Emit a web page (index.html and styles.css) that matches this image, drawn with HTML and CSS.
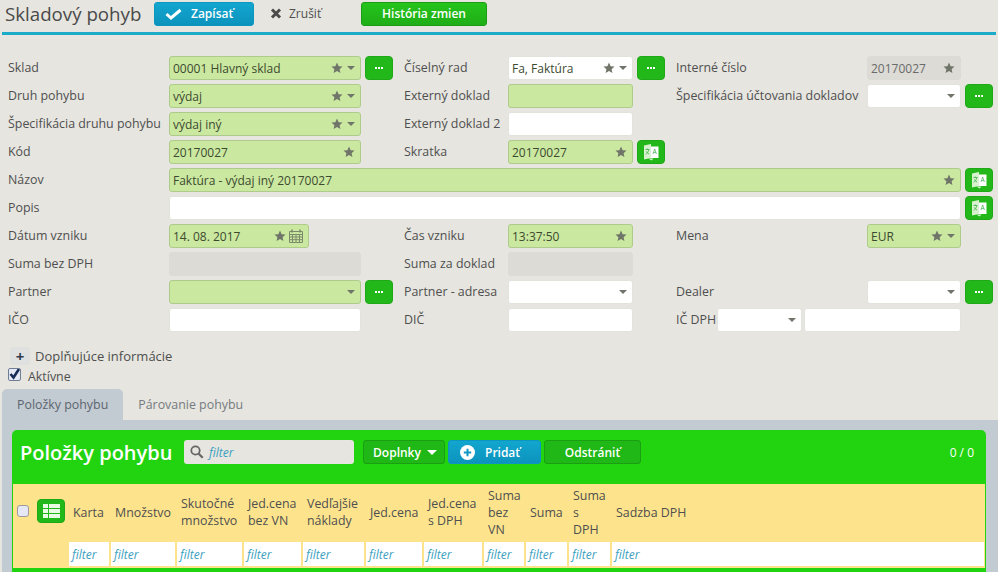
FILE: index.html
```html
<!DOCTYPE html>
<html lang="sk">
<head>
    <meta charset="UTF-8">
    <title>Skladový pohyb</title>
    <link rel="stylesheet" href="styles.css">
</head>
<body>

<svg class="defs" width="0" height="0">
    <symbol id="i-star" viewBox="0 0 12 12"><path d="M6 .6l1.600 3.600 3.900.4-2.900 2.600.8 3.900L6 9.100l-3.400 2 .8-3.900L.5 4.600l3.900-.4z"/></symbol>
    <symbol id="i-dots" viewBox="0 0 8 2"><path d="M0 0h2v2H0zM3 0h2v2H3zM6 0h2v2H6z" fill="#fff"/></symbol>
    <symbol id="i-trans" viewBox="0 0 16 18">
        <path d="M1 2.500L8 1v14l-7 1.500z" fill="#d8f2cf"/>
        <path d="M8 3.500h7.500v11.500H8z" fill="#fff"/>
        <path d="M2.500 6.500h4M4.400 5.500v1M5.800 6.800C5.200 9 4 10.500 2.600 11.500M3.400 8.500c.6 1.200 1.400 2.100 2.600 2.600" fill="none" stroke="#3fae4a" stroke-width=".8"/>
        <path d="M10 11l1.700-5 1.700 5M10.600 9.500h2.200" fill="none" stroke="#58b96a" stroke-width=".8"/>
        <path d="M5.500 15.500h5L8.500 17.500z" fill="#d8f2cf"/>
    </symbol>
</svg>

<header class="topbar">
    <h1 class="page-title">Skladový pohyb</h1>
    <button class="btn btn-blue btn-save">
        <svg width="17" height="12" viewBox="0 0 17 12"><path d="M1.500 6l4.500 4L15.500 2" fill="none" stroke="#fff" stroke-width="3"/></svg>
        Zapísať
    </button>
    <button class="btn-link">
        <svg width="12" height="11" viewBox="0 0 12 11"><path d="M2 1.500l8 8M10 1.500l-8 8" fill="none" stroke="#4a4a4a" stroke-width="3"/></svg>
        Zrušiť
    </button>
    <button class="btn btn-green btn-history">História zmien</button>
</header>

<form class="form-grid">
    <!-- riadok 1 -->
    <label>Sklad</label>
    <div class="field req"><input value="00001 Hlavný sklad"><svg class="star"><use href="#i-star"/></svg><i class="caret"></i></div>
    <div class="side"><button type="button" class="sq"><svg class="dots"><use href="#i-dots"/></svg></button></div>
    <label>Číselný rad</label>
    <div class="field"><input value="Fa, Faktúra"><svg class="star"><use href="#i-star"/></svg><i class="caret"></i></div>
    <div class="side"><button type="button" class="sq"><svg class="dots"><use href="#i-dots"/></svg></button></div>
    <label>Interné číslo</label>
    <div class="field off"><input value="20170027"><svg class="star"><use href="#i-star"/></svg></div>
    <div></div>

    <!-- riadok 2 -->
    <label>Druh pohybu</label>
    <div class="field req"><input value="výdaj"><svg class="star"><use href="#i-star"/></svg><i class="caret"></i></div>
    <div></div>
    <label>Externý doklad</label>
    <div class="field req"><input></div>
    <div></div>
    <label>Špecifikácia účtovania dokladov</label>
    <div class="field"><input><i class="caret"></i></div>
    <div class="side"><button type="button" class="sq"><svg class="dots"><use href="#i-dots"/></svg></button></div>

    <!-- riadok 3 -->
    <label>Špecifikácia druhu pohybu</label>
    <div class="field req"><input value="výdaj iný"><svg class="star"><use href="#i-star"/></svg><i class="caret"></i></div>
    <div></div>
    <label>Externý doklad 2</label>
    <div class="field"><input></div>
    <div class="rest"></div>

    <!-- riadok 4 -->
    <label>Kód</label>
    <div class="field req"><input value="20170027"><svg class="star"><use href="#i-star"/></svg></div>
    <div></div>
    <label>Skratka</label>
    <div class="field req"><input value="20170027"><svg class="star"><use href="#i-star"/></svg></div>
    <div class="side"><button type="button" class="sq"><svg class="trans"><use href="#i-trans"/></svg></button></div>
    <div class="rest-3"></div>

    <!-- riadok 5 -->
    <label>Názov</label>
    <div class="field req wide"><input value="Faktúra - výdaj iný 20170027"><svg class="star"><use href="#i-star"/></svg></div>
    <div class="side"><button type="button" class="sq"><svg class="trans"><use href="#i-trans"/></svg></button></div>

    <!-- riadok 6 -->
    <label>Popis</label>
    <div class="field wide"><input></div>
    <div class="side"><button type="button" class="sq"><svg class="trans"><use href="#i-trans"/></svg></button></div>

    <!-- riadok 7 -->
    <label>Dátum vzniku</label>
    <div class="date-cell">
        <div class="field req date"><input value="14. 08. 2017"><svg class="star"><use href="#i-star"/></svg>
            <svg class="cal" width="14" height="14" viewBox="0 0 14 14"><path d="M.5 2.500h13v11H.5zM.5 5.500h13M.5 8h13M.5 10.700h13M3.500 5.500v8M7 5.500v8M10.500 5.500v8" fill="none" stroke="#7c8a6c"/><path d="M3 .5v3M11 .5v3" stroke="#7c8a6c" stroke-width="1.600"/></svg>
        </div>
    </div>
    <div></div>
    <label>Čas vzniku</label>
    <div class="field req"><input value="13:37:50"><svg class="star"><use href="#i-star"/></svg></div>
    <div></div>
    <label>Mena</label>
    <div class="field req"><input value="EUR"><svg class="star"><use href="#i-star"/></svg><i class="caret"></i></div>
    <div></div>

    <!-- riadok 8 -->
    <label>Suma bez DPH</label>
    <div class="field off"></div>
    <div></div>
    <label>Suma za doklad</label>
    <div class="field off"></div>
    <div class="rest"></div>

    <!-- riadok 9 -->
    <label>Partner</label>
    <div class="field req"><input><i class="caret"></i></div>
    <div class="side"><button type="button" class="sq"><svg class="dots"><use href="#i-dots"/></svg></button></div>
    <label>Partner - adresa</label>
    <div class="field"><input><i class="caret"></i></div>
    <div></div>
    <label>Dealer</label>
    <div class="field"><input><i class="caret"></i></div>
    <div class="side"><button type="button" class="sq"><svg class="dots"><use href="#i-dots"/></svg></button></div>

    <!-- riadok 10 -->
    <label>IČO</label>
    <div class="field"><input></div>
    <div></div>
    <label>DIČ</label>
    <div class="field"><input></div>
    <div></div>
    <div class="vat">
        <label>IČ DPH</label>
        <div class="field vat-code"><input><i class="caret"></i></div>
        <div class="field vat-num"><input></div>
    </div>
</form>

<div class="more">
    <button class="more-btn">+</button>
    <span>Doplňujúce informácie</span>
</div>
<label class="active-row"><input type="checkbox" checked> Aktívne</label>

<nav class="tabs">
    <a class="tab tab-on">Položky pohybu</a>
    <a class="tab">Párovanie pohybu</a>
</nav>

<section class="tab-body">
    <div class="panel">
        <div class="panel-head">
            <h2>Položky pohybu</h2>
            <div class="search">
                <svg width="14" height="14" viewBox="0 0 14 14"><circle cx="5.500" cy="5.500" r="4.200" fill="none" stroke="#666" stroke-width="1.800"/><path d="M8.700 8.700l4 4" stroke="#666" stroke-width="2.200"/></svg>
                <span>filter</span>
            </div>
            <button class="btn btn-dark btn-more">Doplnky <i class="caret caret-w"></i></button>
            <button class="btn btn-blue btn-add">
                <svg width="15" height="15" viewBox="0 0 15 15"><circle cx="7.500" cy="7.500" r="7.500" fill="#fff"/><path d="M3.800 7.500h7.400M7.500 3.800v7.400" stroke="#0f98c4" stroke-width="2"/></svg>
                Pridať
            </button>
            <button class="btn btn-dark btn-del">Odstrániť</button>
            <span class="count">0 / 0</span>
        </div>

        <table class="grid">
            <colgroup>
                <col width="22"><col width="33"><col width="42"><col width="66"><col width="67"><col width="59"><col width="63">
                <col width="58"><col width="60"><col width="42"><col width="43"><col width="43"><col>
            </colgroup>
            <thead>
                <tr class="titles">
                    <th class="chk"><input type="checkbox"></th>
                    <th class="tool"><button class="sq"><svg width="17" height="14" viewBox="0 0 17 14"><path d="M0 0h5v4H0zM6 0h11v4H6zM0 5h5v4H0zM6 5h11v4H6zM0 10h5v4H0zM6 10h11v4H6z" fill="#e9fbe2"/></svg></button></th>
                    <th>Karta</th>
                    <th>Množstvo</th>
                    <th>Skutočné množstvo</th>
                    <th>Jed.cena bez VN</th>
                    <th>Vedľajšie náklady</th>
                    <th>Jed.cena</th>
                    <th>Jed.cena s DPH</th>
                    <th>Suma bez VN</th>
                    <th>Suma</th>
                    <th>Suma<br>s<br>DPH</th>
                    <th>Sadzba DPH</th>
                </tr>
                <tr class="filters">
                    <td></td><td></td>
                    <td><span>filter</span></td><td><span>filter</span></td><td><span>filter</span></td><td><span>filter</span></td><td><span>filter</span></td>
                    <td><span>filter</span></td><td><span>filter</span></td><td><span>filter</span></td><td><span>filter</span></td><td><span>filter</span></td><td><span>filter</span></td>
                </tr>
            </thead>
        </table>
    </div>
</section>

</body>
</html>
```

FILE: styles.css
```css
* {
    box-sizing: border-box;
}

html, body {
    height: 572px;
    overflow: hidden;
}

body {
    margin: 0;
    background: #e6e5df;
    font-family: "Open Sans", "Liberation Sans", sans-serif;
    font-size: 12.4px;
    color: #4f4f4f;
}

.defs {
    display: block;
    height: 0;
}

button {
    font-family: inherit;
}

/* horny pruh */
.topbar {
    display: flex;
    align-items: center;
    height: 35px;
    margin: 0 2px;
    padding: 0 0 5px 3px;
    border-bottom: 3px solid #1cabc9;
}

.page-title {
    margin: 0;
    width: 149px;
    font-size: 18.7px;
    font-weight: 400;
    color: #4a4a4a;
}

.btn {
    display: flex;
    align-items: center;
    justify-content: center;
    height: 24px;
    border-radius: 3px;
    color: #fff;
    font-size: 12px;
    font-weight: 600;
    padding: 0;
    cursor: pointer;
}

.btn-blue {
    background: linear-gradient(#12a6cf, #0c93bd);
    border: 1px solid #0d97c0;
}

.btn-green {
    background: linear-gradient(#25c41b, #1fae17);
    border: 1px solid #1c9c15;
}

.btn-dark {
    background: #1fb816;
    border: 1px solid #1a9f13;
}

.btn-save {
    justify-content: flex-start;
    width: 100px;
    padding-left: 10px;
    gap: 9px;
}

.btn-link {
    display: flex;
    align-items: center;
    gap: 7px;
    width: 91px;
    margin-left: 16px;
    padding: 0;
    border: none;
    background: none;
    font-size: 12px;
    color: #4f4f4f;
}

.btn-history {
    width: 126px;
}

/* formular */
.form-grid {
    display: grid;
    grid-template-columns: 161px 192px 43px 104px 125px 43px 191px 94px 32px;
    grid-auto-rows: 24px;
    row-gap: 4px;
    margin-top: 21px;
    padding-left: 8px;
}

.form-grid label {
    line-height: 23px;
    white-space: nowrap;
}

.field {
    display: flex;
    align-items: center;
    height: 24px;
    padding-right: 5px;
    background: #fff;
    border: 1px solid #e3e3de;
    border-radius: 3px;
}

.field input {
    flex: 1;
    min-width: 0;
    height: 22px;
    padding: 1px 0 0 3px;
    border: none;
    outline: none;
    background: transparent;
    font: 12px "Open Sans", "Liberation Sans", sans-serif;
    color: #3c4a30;
}

.req {
    background: #cbe8a0;
    border-color: #aecb8b;
}

.off {
    background: #dcdbd6;
    border-color: #dcdbd6;
}

.off input {
    color: #6a6a6a;
}

.star {
    flex: none;
    width: 12px;
    height: 12px;
    fill: #6f7568;
}

.caret {
    flex: none;
    width: 0;
    height: 0;
    margin-left: 4px;
    border-left: 4px solid transparent;
    border-right: 4px solid transparent;
    border-top: 4px solid #6f7568;
}

.caret-w {
    border-left-width: 5px;
    border-right-width: 5px;
    border-top: 5px solid #fff;
    margin-left: 6px;
}

.wide {
    grid-column: 2 / 9;
}

.side {
    padding-left: 4px;
}

.rest {
    grid-column: 6 / 10;
}

.rest-3 {
    grid-column: 7 / 10;
}

.date {
    width: 140px;
}

.cal {
    margin-left: 3px;
}

.sq {
    display: flex;
    align-items: center;
    justify-content: center;
    width: 28px;
    height: 24px;
    padding: 0;
    background: #22b81a;
    border: 1px solid #1fa818;
    border-radius: 4px;
}

.dots {
    width: 8px;
    height: 2px;
}

.trans {
    width: 16px;
    height: 18px;
}

.vat {
    grid-column: 7 / 9;
    display: flex;
}

.vat label {
    flex: none;
    width: 41px;
}

.vat-code {
    flex: none;
    width: 85px;
    margin-right: 2px;
}

.vat-num {
    flex: 1;
    min-width: 0;
}

/* doplnujuce */
.more {
    display: flex;
    align-items: center;
    gap: 5px;
    height: 18px;
    margin: 15px 0 0 10px;
    font-size: 13px;
}

.more-btn {
    width: 20px;
    height: 18px;
    padding: 0;
    border: none;
    border-radius: 3px;
    background: #dfe0e0;
    color: #2f3b4e;
    font-size: 15px;
    font-weight: 700;
    line-height: 18px;
}

.active-row {
    display: flex;
    align-items: center;
    gap: 7px;
    height: 18px;
    margin: 2px 0 0 8px;
}

.active-row input {
    appearance: none;
    margin: 0 0 3px;
    width: 13px;
    height: 13px;
    border: 1px solid #6f7c96;
    border-radius: 2px;
    background: #e6e9f4 url("data:image/svg+xml,%3Csvg xmlns='http://www.w3.org/2000/svg' viewBox='0 0 13 13'%3E%3Cpath d='M2.500 6l3 3.500L11 1' fill='none' stroke='%23182c56' stroke-width='2.600'/%3E%3C/svg%3E") center / 13px 13px no-repeat;
}

/* zalozky */
.tabs {
    display: flex;
    height: 31px;
    margin: 4px 0 0 2px;
}

.tab {
    padding: 0 15px;
    line-height: 31px;
    color: #757b80;
}

.tab-on {
    background: #c2cad2;
    border-radius: 5px 5px 0 0;
    color: #5c656e;
}

.tab-body {
    height: 152px;
    margin-left: 2px;
    padding: 10px 12px 0 10px;
    background: #c2cad2;
}

.panel {
    height: 142px;
    padding: 0 1px;
    background: #22d310;
    border-radius: 5px 5px 0 0;
}

.panel-head {
    display: flex;
    align-items: center;
    height: 54px;
    padding: 0 11px 10px 7px;
    color: #fff;
}

.panel-head h2 {
    width: 164px;
    margin: 0;
    font-size: 20px;
    font-weight: 600;
    white-space: nowrap;
}

.search {
    display: flex;
    align-items: center;
    gap: 5px;
    width: 170px;
    height: 24px;
    padding-left: 6px;
    background: #e6e5df;
    border-radius: 3px;
}

.search span,
.filters span {
    font-size: 12px;
    font-style: italic;
    color: #3aa0c0;
}

.btn-more {
    width: 82px;
    margin-left: 9px;
    padding-left: 2px;
}

.btn-add {
    justify-content: flex-start;
    width: 93px;
    margin-left: 3px;
    padding-left: 11px;
    gap: 10px;
}

.btn-del {
    width: 97px;
    margin-left: 3px;
}

.count {
    margin-left: auto;
    font-size: 12px;
}

/* tabulka */
.grid {
    width: 972px;
    table-layout: fixed;
    border-collapse: collapse;
    background: #fde48c;
}

.titles th {
    height: 58px;
    padding: 0 0 2px 5px;
    font-weight: 400;
    line-height: 17px;
    text-align: left;
    color: #4f4f4f;
}

.titles .chk {
    padding-left: 4px;
    padding-bottom: 5px;
}

.chk input {
    appearance: none;
    display: block;
    margin: 0;
    width: 12px;
    height: 12px;
    border: 1px solid #9a9aa0;
    border-radius: 3px;
    background: #e6e8f6;
}

.titles .tool {
    padding: 0 0 4px 2px;
}

.filters td {
    height: 26px;
    padding: 0 1px 2px;
}

.filters span {
    display: block;
    height: 24px;
    padding-left: 3px;
    line-height: 26px;
    background: #fff;
}
```
